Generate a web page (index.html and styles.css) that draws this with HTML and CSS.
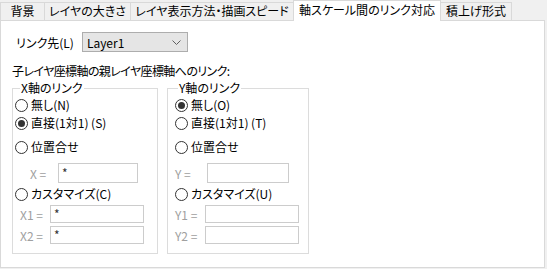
FILE: index.html
```html
<!DOCTYPE html>
<html lang="ja">
<head>
    <meta charset="UTF-8">
    <meta name="viewport" content="width=device-width, initial-scale=1.0">
    <title>軸スケール間のリンク対応</title>
    <link rel="stylesheet" href="styles.css">
</head>
<body>
    <div class="tabs">
        <div class="tab tab-bg">背景</div>
        <div class="tab tab-size">レイヤの大きさ</div>
        <div class="tab tab-view">レイヤ表示方法・描画スピード</div>
        <div class="tab tab-link selected">軸スケール間のリンク対応</div>
        <div class="tab tab-stack">積上げ形式</div>
    </div>

    <div class="panel">
        <div class="link-row">
            <span>リンク先(L)</span>
            <div class="combo">
                <span>Layer1</span>
                <svg class="chevron" width="9" height="5" viewBox="0 0 9 5">
                    <path d="M0.5 0.5 L4.5 4.5 L8.5 0.5" fill="none" stroke="#606060" stroke-width="1"/>
                </svg>
            </div>
        </div>

        <div class="heading">子レイヤ座標軸の親レイヤ座標軸へのリンク:</div>

        <div class="groups">
            <!-- X axis -->
            <fieldset class="group group-x">
                <legend>X軸のリンク</legend>
                <div class="radio first"><span class="dot"></span>無し(N)</div>
                <div class="radio"><span class="dot checked"></span>直接(1対1) (S)</div>
                <div class="radio apart"><span class="dot"></span>位置合せ</div>
                <div class="field-row single">
                    <span class="field-label x-eq">X =</span>
                    <div class="field x-field">*</div>
                </div>
                <div class="radio near"><span class="dot"></span>カスタマイズ(C)</div>
                <div class="field-row small">
                    <span class="field-label x-num">X1 =</span>
                    <div class="field wide">*</div>
                </div>
                <div class="field-row small second">
                    <span class="field-label x-num">X2 =</span>
                    <div class="field wide">*</div>
                </div>
            </fieldset>

            <!-- Y axis -->
            <fieldset class="group group-y">
                <legend>Y軸のリンク</legend>
                <div class="radio first"><span class="dot checked"></span>無し(O)</div>
                <div class="radio"><span class="dot"></span>直接(1対1) (T)</div>
                <div class="radio apart"><span class="dot"></span>位置合せ</div>
                <div class="field-row single">
                    <span class="field-label y-eq">Y =</span>
                    <div class="field y-field"></div>
                </div>
                <div class="radio near"><span class="dot"></span>カスタマイズ(U)</div>
                <div class="field-row small">
                    <span class="field-label y-num">Y1 =</span>
                    <div class="field wide"></div>
                </div>
                <div class="field-row small second">
                    <span class="field-label y-num">Y2 =</span>
                    <div class="field wide"></div>
                </div>
            </fieldset>
        </div>
    </div>
</body>
</html>
```

FILE: styles.css
```css
body {
    margin: 0;
    background-color: #f0f0f0;
    font-family: "Noto Sans CJK JP", "Noto Sans", sans-serif;
    font-size: 12px;
    font-feature-settings: "palt";
    color: #000;
}

/* Tab strip */
.tabs {
    display: flex;
    align-items: flex-end;
    height: 20px;
}

.tab {
    box-sizing: border-box;
    height: 18px;
    line-height: 16px;
    border: 1px solid #d9d9d9;
    border-bottom: none;
    margin-right: -1px;
    background-color: #f0f0f0;
    text-align: center;
    white-space: nowrap;
}

.tab-bg { width: 45px; }
.tab-size { width: 87px; }
.tab-view { width: 164px; }
.tab-link { width: 148px; }
.tab-stack { width: 72px; }

.tab.selected {
    position: relative;
    z-index: 1;
    height: 21px;
    line-height: 18px;
    margin-bottom: -1px;
    background-color: #fff;
}

/* Page panel */
.panel {
    box-sizing: border-box;
    width: 545px;
    height: 248px;
    border: 1px solid #d9d9d9;
    background-color: #fff;
    padding: 11px 11px 0 11px;
}

.link-row {
    display: flex;
    align-items: center;
    margin-left: 4px;
    height: 20px;
}

.combo {
    box-sizing: border-box;
    display: flex;
    align-items: center;
    justify-content: space-between;
    width: 106px;
    height: 20px;
    margin-left: 8px;
    padding: 0 6px 0 4px;
    border: 1px solid #adadad;
    background-color: #e5e5e5;
}

.heading {
    margin-top: 11px;
    height: 16px;
    line-height: 16px;
    letter-spacing: -0.6px;
}

.groups {
    display: flex;
    margin-top: 2px;
}

.group {
    box-sizing: border-box;
    margin: 0;
    height: 173px;
    border: 1px solid #dcdcdc;
    padding: 0;
}

.group legend {
    padding: 0 1px;
    height: 14px;
    line-height: 14px;
}

.group-x {
    width: 146px;
    padding-left: 2px;
}

.group-x legend {
    margin-left: 5px;
}

.group-y {
    width: 142px;
    margin-left: 9px;
    padding-left: 7px;
}

.group-y legend {
    margin-left: 3px;
}

/* Radio buttons */
.radio {
    display: flex;
    align-items: center;
    height: 18px;
    line-height: 18px;
    white-space: nowrap;
}

.radio.first { margin-top: 1px; }
.radio.near { margin-top: 2px; }
.radio.apart { margin-top: 6px; }

.dot {
    box-sizing: border-box;
    position: relative;
    width: 13px;
    height: 13px;
    margin-right: 3px;
    border: 1px solid #333;
    border-radius: 50%;
    background-color: #fff;
}

.dot.checked::after {
    content: "";
    position: absolute;
    left: 2px;
    top: 2px;
    width: 7px;
    height: 7px;
    border-radius: 50%;
    background-color: #333;
}

/* Disabled text fields */
.field-row {
    display: flex;
    align-items: center;
}

.field-row.single { margin-top: 7px; }
.field-row.small { margin-top: 2px; }
.field-row.second { margin-top: 3px; }

.field-label {
    color: #a0a0a0;
    white-space: nowrap;
}

.x-eq { width: 28px; margin-left: 15px; }
.x-num { width: 30px; margin-left: 5px; }
.y-eq { width: 32px; }
.y-num { width: 30px; }

.field {
    box-sizing: border-box;
    height: 18px;
    line-height: 16px;
    padding-left: 3px;
    border: 1px solid #cccccc;
    background-color: #fff;
    color: #333;
}

.single .field { height: 20px; line-height: 18px; }

.x-field { width: 80px; }
.y-field { width: 82px; }
.wide { width: 94px; }
```
